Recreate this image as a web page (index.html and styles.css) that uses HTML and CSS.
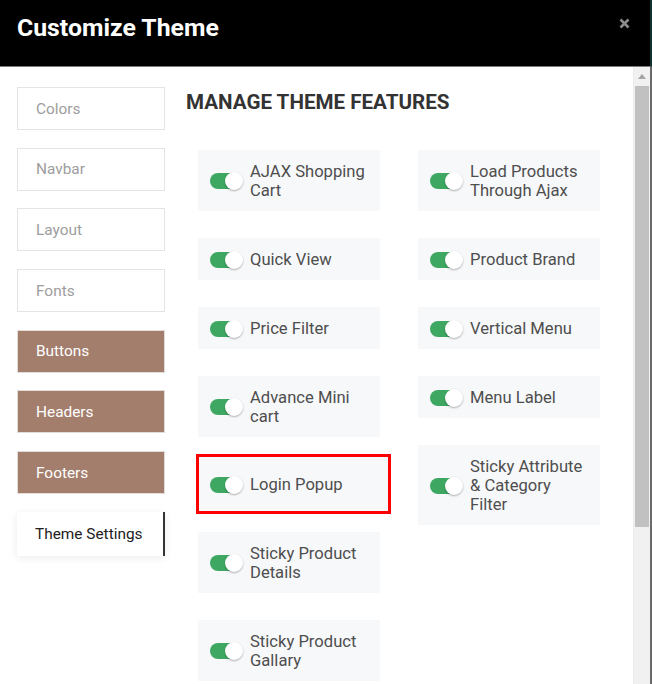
FILE: index.html
```html
<!DOCTYPE html>
<html>
<head>
<meta charset="utf-8">
<link rel="stylesheet" href="styles.css">
</head>
<body>
<div class="modal">
  <div class="header">
    <h1 class="title">Customize Theme</h1>
    <button class="close" aria-label="Close">
      <svg width="11" height="11" viewBox="0 0 11 11"><path d="M1.5 1.5 L9.5 9.5 M9.5 1.5 L1.5 9.5" stroke="#8c8c8c" stroke-width="2.6" stroke-linecap="butt"/></svg>
    </button>
  </div>
  <div class="body">
    <div class="content">
      <nav class="sidebar">
        <div class="tab">Colors</div>
        <div class="tab">Navbar</div>
        <div class="tab">Layout</div>
        <div class="tab">Fonts</div>
        <div class="tab brown">Buttons</div>
        <div class="tab brown">Headers</div>
        <div class="tab brown">Footers</div>
        <div class="tab active">Theme Settings</div>
      </nav>
      <div class="main">
        <h2 class="heading">MANAGE THEME FEATURES</h2>
        <div class="cols">
          <div class="col">
            <div class="card"><span class="toggle"><span class="knob"></span></span><span class="label">AJAX Shopping Cart</span></div>
            <div class="card"><span class="toggle"><span class="knob"></span></span><span class="label">Quick View</span></div>
            <div class="card"><span class="toggle"><span class="knob"></span></span><span class="label">Price Filter</span></div>
            <div class="card"><span class="toggle"><span class="knob"></span></span><span class="label">Advance Mini cart</span></div>
            <div class="card highlight"><span class="toggle"><span class="knob"></span></span><span class="label">Login Popup</span></div>
            <div class="card"><span class="toggle"><span class="knob"></span></span><span class="label">Sticky Product Details</span></div>
            <div class="card"><span class="toggle"><span class="knob"></span></span><span class="label">Sticky Product Gallary</span></div>
          </div>
          <div class="col">
            <div class="card"><span class="toggle"><span class="knob"></span></span><span class="label">Load Products Through Ajax</span></div>
            <div class="card"><span class="toggle"><span class="knob"></span></span><span class="label">Product Brand</span></div>
            <div class="card"><span class="toggle"><span class="knob"></span></span><span class="label">Vertical Menu</span></div>
            <div class="card"><span class="toggle"><span class="knob"></span></span><span class="label">Menu Label</span></div>
            <div class="card"><span class="toggle"><span class="knob"></span></span><span class="label">Sticky Attribute &amp; Category Filter</span></div>
          </div>
        </div>
      </div>
    </div>
    <div class="scrollbar">
      <div class="arrow"></div>
      <div class="thumb"></div>
    </div>
    <div class="edge"></div>
  </div>
</div>
</body>
</html>
```
FILE: styles.css
```css
* { box-sizing: border-box; }
html, body { margin: 0; padding: 0; }
body {
  width: 652px;
  height: 684px;
  overflow: hidden;
  background: #fff;
  font-family: Roboto, "Liberation Sans", sans-serif;
}
.modal {
  display: flex;
  flex-direction: column;
  height: 684px;
}
.header {
  height: 67px;
  flex: none;
  background: #000;
  border-bottom: 1px solid #7a7a7a;
  border-right: 2px solid #12332f;
  display: flex;
  align-items: flex-start;
  justify-content: space-between;
  padding: 14px 0 0 17px;
}
.title {
  margin: 0;
  color: #fff;
  font-size: 24.8px;
  line-height: 28px;
  font-weight: 700;
}
.close {
  border: 0;
  background: none;
  padding: 0;
  margin: 4px 20px 0 0;
  width: 11px;
  height: 11px;
  display: block;
}
.close svg { display: block; }
.body {
  flex: 1;
  display: flex;
  min-height: 0;
  overflow: hidden;
}
.content {
  flex: 1;
  display: flex;
  padding: 20px 0 0 17px;
  border-left: 1px solid #f0f0f0;
  margin-left: -1px;
}
.sidebar {
  width: 148px;
  flex: none;
  display: flex;
  flex-direction: column;
  gap: 17.7px;
}
.tab {
  height: 43px;
  flex: none;
  border: 1px solid #e4e4e4;
  padding-left: 18px;
  display: flex;
  align-items: center;
  font-size: 15.4px;
  color: #9d9d9d;
  background: #fff;
}
.tab.brown {
  background: #a47e6d;
  color: #fff;
  border-color: #e2dcd8;
}
.tab.active {
  height: 44px;
  border: 0;
  border-right: 2px solid #333;
  color: #222;
  box-shadow: 0 2px 8px rgba(0, 0, 0, 0.08);
}
.main {
  margin-left: 21px;
  padding-top: 3px;
}
.heading {
  margin: 0 0 36px;
  font-size: 20.6px;
  line-height: 24px;
  font-weight: 700;
  color: #333;
}
.cols {
  display: flex;
  gap: 38px;
  padding-left: 12px;
}
.col {
  width: 182px;
  flex: none;
  display: flex;
  flex-direction: column;
  gap: 27px;
}
.card {
  background: #f7f8fa;
  display: flex;
  align-items: center;
  padding: 12px 12px 11px 12px;
}
.card.highlight {
  width: 195px;
  margin: -10px 0 -9px -2px;
  border: 3px solid #f00;
  padding: 18px 11px 17px 11px;
}
.toggle {
  flex: none;
  width: 32px;
  height: 16px;
  border-radius: 8px;
  background: #3ea862;
  position: relative;
  margin-right: 8px;
}
.knob {
  position: absolute;
  right: -1px;
  top: -1px;
  width: 18px;
  height: 18px;
  border-radius: 50%;
  background: #fff;
  box-shadow: 0 1px 2px rgba(0, 0, 0, 0.3);
}
.label {
  font-size: 16.6px;
  line-height: 19px;
  color: #4e4e4e;
}
.scrollbar {
  width: 17px;
  flex: none;
  background: #f1f1f1;
  border-left: 1px solid #ececec;
  position: relative;
  padding-top: 7px;
}
.arrow {
  margin: 0 auto;
  width: 0;
  height: 0;
  border-left: 4px solid transparent;
  border-right: 4px solid transparent;
  border-bottom: 5px solid #a3a3a3;
}
.thumb {
  margin: 7px 1px 0 1px;
  height: 441px;
  background: #c1c1c1;
}
.edge {
  width: 2px;
  flex: none;
  background: #6a6a6a;
}
```
